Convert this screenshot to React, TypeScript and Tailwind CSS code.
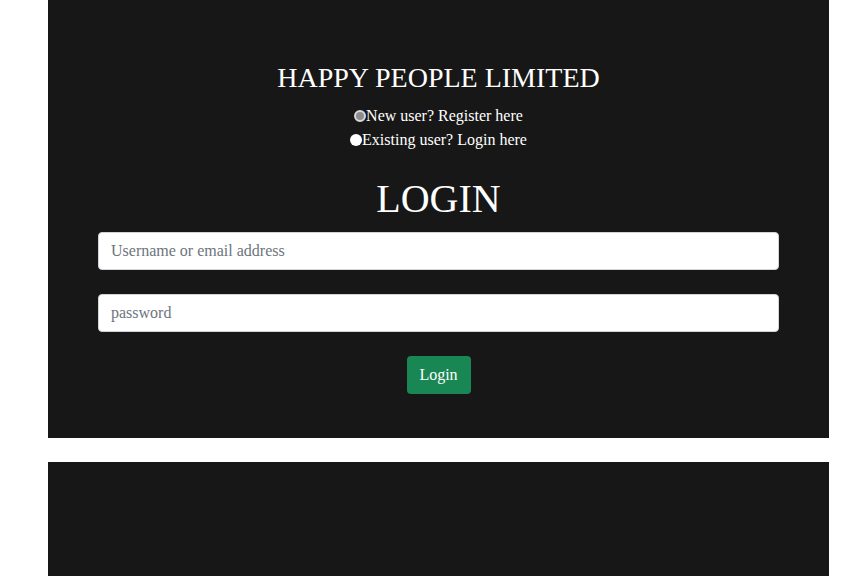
export default function App() {
  const serif = { fontFamily: '"Liberation Serif", "Times New Roman", serif' };
  return (
    <div className="w-[850px] h-[587px] bg-white overflow-hidden" style={serif}>
      <div className="ml-[48px] w-[781px] h-[438px] bg-[#171717] flex flex-col items-center px-[50px] pt-[62px]">
        <h1 className="text-[28px] leading-[32px] text-white">HAPPY PEOPLE LIMITED</h1>
        <div className="mt-[10px] flex flex-col items-center text-white text-[16px] leading-[24px]">
          <label className="flex items-center">
            <span className="w-[12px] h-[12px] rounded-full bg-[#8c8c8c] border-[2px] border-[#d9d9d9]" />
            <span>New user? Register here</span>
          </label>
          <label className="flex items-center">
            <span className="w-[12px] h-[12px] rounded-full bg-white" />
            <span>Existing user? Login here</span>
          </label>
        </div>
        <h2 className="mt-[24px] text-[40px] leading-[46px] text-white">LOGIN</h2>
        <input
          className="mt-[10px] w-full h-[38px] rounded-[4px] border border-[#ced4da] bg-white px-[12px] text-[16px] text-[#212529] placeholder:text-[#6c757d] outline-none"
          placeholder="Username or email address"
          style={serif}
        />
        <input
          className="mt-[24px] w-full h-[38px] rounded-[4px] border border-[#ced4da] bg-white px-[12px] text-[16px] text-[#212529] placeholder:text-[#6c757d] outline-none"
          placeholder="password"
          style={serif}
        />
        <button
          className="mt-[24px] h-[38px] w-[64px] rounded-[4px] bg-[#198754] text-white text-[16px]"
          style={serif}
        >
          Login
        </button>
      </div>
      <div className="mt-[24px] ml-[48px] w-[781px] h-[114px] bg-[#171717]" />
    </div>
  );
}
